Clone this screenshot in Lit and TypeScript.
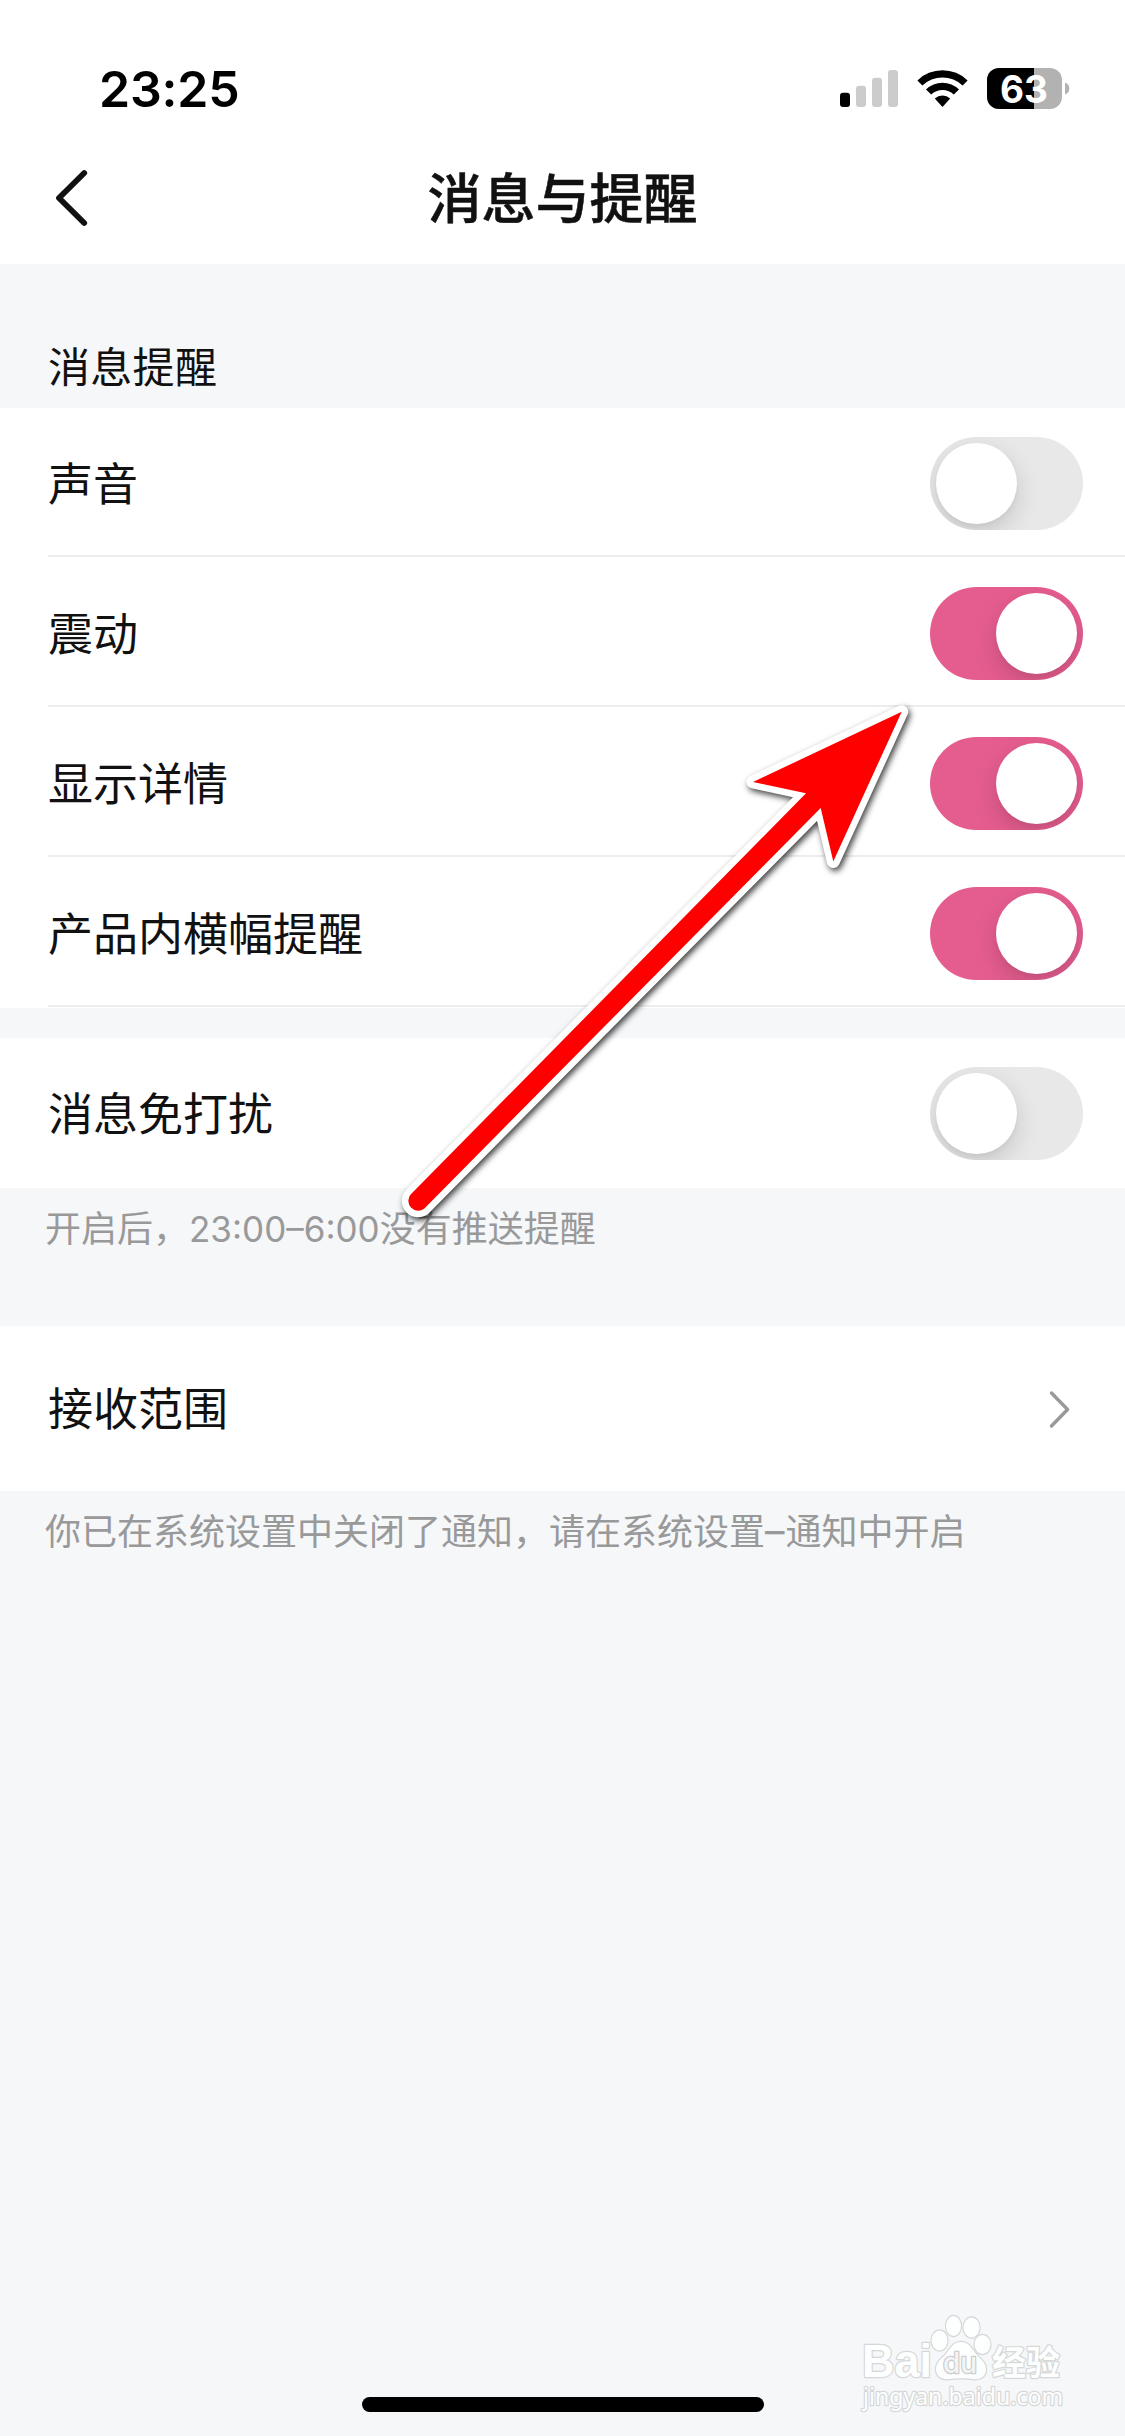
import { LitElement, html, css, svg } from "lit";
import { customElement, property } from "lit/decorators.js";

@customElement("toggle-switch")
class ToggleSwitch extends LitElement {
  @property({ type: Boolean, reflect: true }) on = false;

  static styles = css`
    :host {
      display: flex;
      flex: none;
      box-sizing: border-box;
      width: 153px;
      height: 93px;
      padding: 6px;
      border-radius: 47px;
      background: #e8e8e8;
      overflow: hidden;
    }
    :host([on]) {
      background: #e55d8f;
      justify-content: flex-end;
    }
    .knob {
      width: 81px;
      height: 81px;
      border-radius: 50%;
      background: #fff;
      box-shadow: 0 9px 24px rgba(0, 0, 0, 0.15), 0 3px 4px rgba(0, 0, 0, 0.03);
    }
  `;

  render() {
    return html`<div class="knob"></div>`;
  }
}

@customElement("status-bar")
class StatusBar extends LitElement {
  static styles = css`
    :host {
      display: flex;
      justify-content: space-between;
      align-items: center;
      box-sizing: border-box;
      height: 132px;
      padding: 45px 56px 0 99px;
    }
    .time {
      font: 600 50px/60px Inter, sans-serif;
      letter-spacing: -0.2px;
      color: #000;
    }
    .icons {
      display: block;
      width: 229px;
      height: 41px;
      overflow: visible;
    }
    .level {
      font: 700 38px Inter, sans-serif;
      fill: #fff;
    }
  `;

  render() {
    return html`
      <span class="time">23:25</span>
      <svg class="icons" viewBox="840 68 229 41">
        <rect x="840" y="92.7" width="10" height="14.3" rx="3" fill="#000" />
        <rect x="856" y="85.7" width="10" height="21.3" rx="3" fill="#ccc" />
        <rect x="872" y="77.7" width="10" height="29.3" rx="3" fill="#ccc" />
        <rect x="888" y="70" width="10" height="37" rx="3" fill="#ccc" />
        <path d="M917.4 80.4a36 36 0 0 1 50.2 0l-5 5.2a29 29 0 0 0-40.2 0z" />
        <path d="M926 89.4a23.6 23.6 0 0 1 33 0l-5.2 5.2a16.4 16.4 0 0 0-22.6 0z" />
        <path d="M934.8 98.4a11.4 11.4 0 0 1 15.4 0l-7.7 8.6z" />
        <clipPath id="body"><rect x="987" y="68" width="75" height="41" rx="12" /></clipPath>
        <g clip-path="url(#body)">
          <rect x="987" y="68" width="75" height="41" fill="#b2b2b2" />
          <rect x="987" y="68" width="47" height="41" fill="#000" />
        </g>
        <path d="M1065 82.6a6.2 6.2 0 0 1 0 11.8z" fill="#b2b2b2" />
        <text class="level" x="1024" y="102.6" text-anchor="middle" textLength="48" lengthAdjust="spacingAndGlyphs">63</text>
      </svg>
    `;
  }
}

@customElement("setting-row")
class SettingRow extends LitElement {
  @property() label = "";
  @property({ type: Boolean }) on = false;
  @property({ type: Boolean }) link = false;
  @property({ type: Boolean, reflect: true }) divided = false;

  static styles = css`
    :host {
      display: block;
      background: #fff;
      padding-left: 48px;
    }
    .row {
      display: flex;
      align-items: center;
      justify-content: space-between;
      box-sizing: border-box;
      height: 150px;
      padding-right: 42px;
    }
    :host([divided]) .row {
      height: 149px;
      border-bottom: 2px solid #ededed;
    }
    :host([divided]) {
      padding-bottom: 1px;
    }
    :host([divided]) toggle-switch {
      margin-top: 4px;
    }
    .row.link {
      height: 165px;
      padding-right: 53px;
    }
    .label {
      font: 400 45px/64px "Noto Sans CJK SC", sans-serif;
      color: #111;
    }
    :host(:not([divided])) .label {
      margin-bottom: 3px;
    }
    .chevron {
      display: block;
      width: 24px;
      height: 40px;
    }
  `;

  render() {
    return html`
      <div class="row ${this.link ? "link" : ""}">
        <span class="label">${this.label}</span>
        ${this.link
          ? html`<svg class="chevron" viewBox="0 0 24 40">
              <path d="M3.5 4 19.6 20.5 3.5 37" fill="none" stroke="#999" stroke-width="3.4" stroke-linecap="round" stroke-linejoin="round" />
            </svg>`
          : html`<toggle-switch ?on=${this.on}></toggle-switch>`}
      </div>
    `;
  }
}

@customElement("app-root")
class AppRoot extends LitElement {
  static styles = css`
    :host {
      display: flex;
      flex-direction: column;
      position: relative;
      width: 1125px;
      height: 2436px;
      overflow: hidden;
      background: #f5f7f9;
      font-family: "Noto Sans CJK SC", sans-serif;
    }
    .top {
      background: #fff;
      height: 264px;
    }
    .nav {
      display: grid;
      grid-template-columns: 120px 1fr 120px;
      align-items: center;
      height: 132px;
    }
    .back {
      display: block;
      width: 36px;
      height: 60px;
      margin-left: 54px;
    }
    .title {
      margin-bottom: 4px;
      text-align: center;
      font-size: 54px;
      line-height: 80px;
      font-weight: 500;
      -webkit-text-stroke: 0.5px #111;
      color: #111;
    }
    .heading {
      box-sizing: border-box;
      height: 144px;
      padding: 70px 48px 0;
      font-size: 42px;
      line-height: 62px;
      letter-spacing: 0.3px;
      color: #111;
    }
    .group {
      margin-bottom: 30px;
    }
    .note {
      box-sizing: border-box;
      height: 138px;
      padding: 12px 45px 0;
      font-size: 36px;
      line-height: 52px;
      color: #999;
      white-space: nowrap;
    }
    .num {
      font-family: Inter, sans-serif;
      font-size: 35px;
    }
    .dash {
      font-family: Inter, sans-serif;
      font-size: 39px;
      line-height: 1;
      padding-right: 1px;
    }
    .arrow {
      position: absolute;
      left: 380px;
      top: 680px;
      width: 560px;
      height: 560px;
      filter: drop-shadow(2px 3px 3px rgba(0, 0, 0, 0.75));
    }
    .watermark {
      position: absolute;
      left: 855px;
      top: 2305px;
      width: 215px;
      height: 115px;
      fill: #fdfefe;
      stroke: #d6d7d8;
      stroke-width: 2.4px;
      stroke-linejoin: round;
      paint-order: stroke;
    }
    .brand {
      font: 700 47px "Liberation Sans", sans-serif;
    }
    .du {
      font: 500 28px Inter, sans-serif;
      fill: #f3f4f5;
      stroke: #cbcccd;
    }
    .cn {
      font: 700 34px "Noto Sans CJK SC", sans-serif;
    }
    .url {
      font: 400 23px "Noto Sans", sans-serif;
    }
    .home {
      position: absolute;
      left: 362px;
      top: 2397px;
      width: 402px;
      height: 15px;
      border-radius: 8px;
      background: #000;
    }
  `;

  private alerts = [
    { label: "声音", on: false },
    { label: "震动", on: true },
    { label: "显示详情", on: true },
    { label: "产品内横幅提醒", on: true },
  ];

  private arrow() {
    const outline =
      "M901.7 711.7 753 782 806 793.3 410.6 1194.6A9.8 9.8 0 0 0 424.4 1208.4L820.7 808 833.3 861.5Z";
    return svg`
      <path d=${outline} fill="#fff" stroke="#fff" stroke-width="13" stroke-linejoin="round" />
      <path d=${outline} fill="#f00" />
    `;
  }

  render() {
    return html`
      <div class="top">
        <status-bar></status-bar>
        <div class="nav">
          <svg class="back" viewBox="54 168 36 60">
            <path d="M84.2 173 59 198 84.2 223" fill="none" stroke="#111" stroke-width="5.8" stroke-linecap="round" stroke-linejoin="round" />
          </svg>
          <span class="title">消息与提醒</span>
        </div>
      </div>
      <div class="heading">消息提醒</div>
      <div class="group">
        ${this.alerts.map(
          (a) => html`<setting-row divided label=${a.label} ?on=${a.on}></setting-row>`
        )}
      </div>
      <setting-row label="消息免打扰"></setting-row>
      <div class="note">开启后，<span class="num">23:00–6:00</span>没有推送提醒</div>
      <setting-row link label="接收范围"></setting-row>
      <div class="note">你已在系统设置中关闭了通知，请在系统设置<span class="dash">–</span>通知中开启</div>

      <svg class="arrow" viewBox="380 680 560 560">${this.arrow()}</svg>

      <svg class="watermark" viewBox="855 2305 215 115">
        <text class="brand" x="862" y="2377" textLength="70" lengthAdjust="spacingAndGlyphs">Bai</text>
        <ellipse cx="939.5" cy="2340.5" rx="8" ry="10" />
        <ellipse cx="953.5" cy="2326" rx="7.5" ry="10" />
        <ellipse cx="971.5" cy="2327.5" rx="8" ry="10" />
        <ellipse cx="982.5" cy="2344.5" rx="8" ry="9.5" />
        <path d="M961 2342c-9 0-11 8-17 14-6 5-8 9-8 13 0 8 7 11 13 10 8-1 16-1 24 0 7 1 13-2 13-10 0-5-3-8-8-13-6-6-8-14-17-14z" />
        <text class="du" x="943" y="2373" textLength="34" lengthAdjust="spacingAndGlyphs">du</text>
        <text class="cn" x="992" y="2375" textLength="68" lengthAdjust="spacingAndGlyphs">经验</text>
        <text class="url" x="863" y="2405" textLength="200" lengthAdjust="spacingAndGlyphs">jingyan.baidu.com</text>
      </svg>
      <div class="home"></div>
    `;
  }
}
